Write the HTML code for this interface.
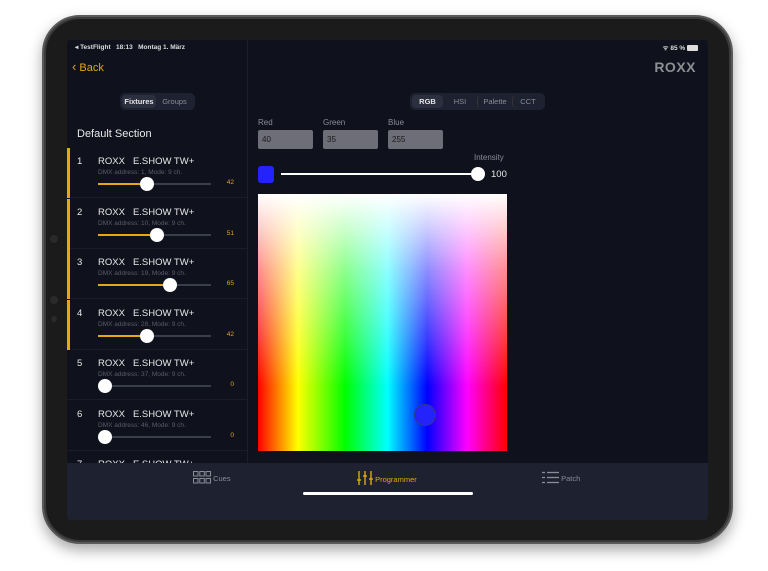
<!DOCTYPE html>
<html><head><meta charset="utf-8"><style>
*{margin:0;padding:0;box-sizing:border-box}
body{width:768px;height:571px;background:#fff;position:relative;overflow:hidden;font-family:"Liberation Sans",sans-serif}
.dev{position:absolute;left:42px;top:15px;width:691px;height:529px;border-radius:38px;background:#3a3a3a;box-shadow:0 6px 14px rgba(0,0,0,.35);border:2px solid #5a5a5a}
.bez{position:absolute;left:46px;top:19px;width:683px;height:521px;border-radius:34px;background:#1b1b1c}
.scr{position:absolute;left:67px;top:40px;width:641px;height:480px;background:#0f111d;overflow:hidden;border-radius:3px}
.abs{position:absolute}
.y{color:#e3a812}
.seg{position:absolute;background:#1e2130;border-radius:5px;height:17px;display:flex;align-items:center;padding:2px}
.seg div{font-size:7.5px;color:#8a8c96;text-align:center;height:13px;line-height:13px;border-radius:4px}
.seg .on{background:#2c2f3d;color:#e6e6e6;font-weight:bold}
.row{position:absolute;left:0;width:181px;height:50px;border-bottom:1px solid #1a1d29}
.row .bar{position:absolute;left:0;top:0;width:3px;height:50px;background:#e3a812}
.row .n{position:absolute;left:10px;top:8px;font-size:9.5px;color:#e8e8e8}
.row .t{position:absolute;left:31px;top:8px;font-size:9.5px;color:#e8e8e8;white-space:nowrap}
.row .t b{font-weight:normal;margin-left:8px}
.row .d{position:absolute;left:31px;top:21px;font-size:6.5px;color:#5a5d69}
.row .tr{position:absolute;left:31px;top:35px;width:113px;height:2px;background:#3a3d4a}
.row .fl{position:absolute;left:31px;top:35px;height:2px;background:#e3a812}
.row .th{position:absolute;top:29px;width:14px;height:14px;border-radius:50%;background:#fff}
.row .v{position:absolute;right:14px;top:31px;font-size:6.5px;color:#e3a812}
.lab{position:absolute;font-size:8px;color:#8a8c96}
.inp{position:absolute;width:55px;height:19px;background:#6d6e78;border-radius:2px;font-size:8px;color:#1a1a1a;padding-left:4px;line-height:19px}
</style></head><body>
<div class="dev"></div><div class="bez"></div>
<div class="abs" style="left:50px;top:235px;width:8px;height:8px;border-radius:50%;background:#2a2a2a"></div>
<div class="abs" style="left:50px;top:296px;width:8px;height:8px;border-radius:50%;background:#2a2a2a"></div>
<div class="abs" style="left:51px;top:316px;width:6px;height:6px;border-radius:50%;background:#2a2a2a"></div>
<div class="scr">
 <div class="abs" style="left:8px;top:3px;font-size:6.5px;color:#ddd;font-weight:bold">◂ TestFlight &nbsp; 18:13 &nbsp; Montag 1. März</div>
 <div class="abs" style="right:10px;top:3px;font-size:6.5px;color:#ddd;font-weight:bold">ᯤ 85 % <span style="display:inline-block;width:11px;height:6px;border:1px solid #ddd;border-radius:1px;background:#ddd;vertical-align:-1px"></span></div>
 <div class="abs y" style="left:5px;top:19px;font-size:11px"><span style="font-size:13px">‹</span> Back</div>
 <div class="abs" style="right:12px;top:19px;font-size:14px;font-weight:900;color:#8e8f93;letter-spacing:0.5px">ROXX</div>
 <div class="abs" style="left:180px;top:0;width:1px;height:423px;background:#1d202c"></div>
 <div class="seg" style="left:53px;top:53px;width:75px"><div class="on" style="width:34px">Fixtures</div><div style="width:37px">Groups</div></div>
 <div class="abs" style="left:10px;top:88px;font-size:11px;color:#e8e8e8">Default Section</div>
 <div class="abs" style="left:0;top:108px;width:181px;height:315px;overflow:hidden">
  <div class="row" style="top:0"><div class="bar"></div><div class="n">1</div><div class="t">ROXX<b>E.SHOW TW+</b></div><div class="d">DMX address: 1, Mode: 9 ch.</div><div class="tr"></div><div class="fl" style="width:49px"></div><div class="th" style="left:73px"></div><div class="v">42</div></div>
  <div class="row" style="top:50.5px"><div class="bar"></div><div class="n">2</div><div class="t">ROXX<b>E.SHOW TW+</b></div><div class="d">DMX address: 10, Mode: 9 ch.</div><div class="tr"></div><div class="fl" style="width:59px"></div><div class="th" style="left:83px"></div><div class="v">51</div></div>
  <div class="row" style="top:101px"><div class="bar"></div><div class="n">3</div><div class="t">ROXX<b>E.SHOW TW+</b></div><div class="d">DMX address: 19, Mode: 9 ch.</div><div class="tr"></div><div class="fl" style="width:72px"></div><div class="th" style="left:96px"></div><div class="v">65</div></div>
  <div class="row" style="top:151.5px"><div class="bar"></div><div class="n">4</div><div class="t">ROXX<b>E.SHOW TW+</b></div><div class="d">DMX address: 28, Mode: 9 ch.</div><div class="tr"></div><div class="fl" style="width:49px"></div><div class="th" style="left:73px"></div><div class="v">42</div></div>
  <div class="row" style="top:202px"><div class="n">5</div><div class="t">ROXX<b>E.SHOW TW+</b></div><div class="d">DMX address: 37, Mode: 9 ch.</div><div class="tr"></div><div class="th" style="left:31px"></div><div class="v">0</div></div>
  <div class="row" style="top:252.5px"><div class="n">6</div><div class="t">ROXX<b>E.SHOW TW+</b></div><div class="d">DMX address: 46, Mode: 9 ch.</div><div class="tr"></div><div class="th" style="left:31px"></div><div class="v">0</div></div>
  <div class="row" style="top:303px"><div class="n">7</div><div class="t">ROXX<b>E.SHOW TW+</b></div></div>
 </div>
 <div class="seg" style="left:343px;top:53px;width:135px"><div class="on" style="width:31px">RGB</div><div style="width:34px">HSI</div><div style="width:35px;border-left:1px solid #333">Palette</div><div style="width:31px;border-left:1px solid #333">CCT</div></div>
 <div class="lab" style="left:191px;top:78px">Red</div>
 <div class="lab" style="left:256px;top:78px">Green</div>
 <div class="lab" style="left:321px;top:78px">Blue</div>
 <div class="inp" style="left:191px;top:90px">40</div>
 <div class="inp" style="left:256px;top:90px">35</div>
 <div class="inp" style="left:321px;top:90px">255</div>
 <div class="lab" style="left:407px;top:113px">Intensity</div>
 <div class="abs" style="left:191px;top:126px;width:16px;height:17px;background:#2523fb;border-radius:3px"></div>
 <div class="abs" style="left:214px;top:133px;width:200px;height:2px;background:#fff"></div>
 <div class="abs" style="left:404px;top:127px;width:14px;height:14px;border-radius:50%;background:#fff"></div>
 <div class="abs" style="left:424px;top:129px;font-size:9.5px;color:#e8e8e8">100</div>
 <div class="abs" style="left:191px;top:154px;width:249px;height:257px;background:linear-gradient(to bottom,#fff 0%,rgba(255,255,255,.55) 30%,rgba(255,255,255,0) 75%),linear-gradient(to right,#f00 0%,#ff0 16%,#0f0 35%,#0ff 52%,#00f 68%,#f0f 84%,#f00 100%)"></div>
 <div class="abs" style="left:347px;top:364px;width:22px;height:22px;border-radius:50%;background:#2523fb;border:1px solid #333a80"></div>
 <div class="abs" style="left:0;top:423px;width:641px;height:57px;background:#1e2130">
  <div class="abs" style="left:126px;top:8px;font-size:7.5px;color:#8a8c96"><svg width="18" height="13" style="vertical-align:-3px"><g fill="none" stroke="#8a8c96" stroke-width="1"><rect x=".5" y=".5" width="4.5" height="4.5"/><rect x="6.8" y=".5" width="4.5" height="4.5"/><rect x="13" y=".5" width="4.5" height="4.5"/><rect x=".5" y="7.5" width="4.5" height="4.5"/><rect x="6.8" y="7.5" width="4.5" height="4.5"/><rect x="13" y="7.5" width="4.5" height="4.5"/></g></svg> Cues</div>
  <div class="abs y" style="left:290px;top:8px;font-size:7.5px"><svg width="16" height="14" style="vertical-align:-3px"><g stroke="#e3a812" stroke-width="1.4"><line x1="2" y1="0" x2="2" y2="14"/><line x1="8" y1="0" x2="8" y2="14"/><line x1="14" y1="0" x2="14" y2="14"/><line x1="0" y1="9" x2="4" y2="9"/><line x1="6" y1="5" x2="10" y2="5"/><line x1="12" y1="8" x2="16" y2="8"/></g></svg> Programmer</div>
  <div class="abs" style="left:475px;top:8px;font-size:7.5px;color:#8a8c96"><svg width="17" height="13" style="vertical-align:-3px"><g stroke="#8a8c96" stroke-width="1.3"><line x1="0" y1="1.5" x2="3" y2="1.5"/><line x1="5" y1="1.5" x2="17" y2="1.5"/><line x1="0" y1="6.5" x2="3" y2="6.5"/><line x1="5" y1="6.5" x2="17" y2="6.5"/><line x1="0" y1="11.5" x2="3" y2="11.5"/><line x1="5" y1="11.5" x2="17" y2="11.5"/></g></svg> Patch</div>
  <div class="abs" style="left:236px;top:29px;width:170px;height:3px;border-radius:2px;background:#fff"></div>
 </div>
</div>
</body></html>
